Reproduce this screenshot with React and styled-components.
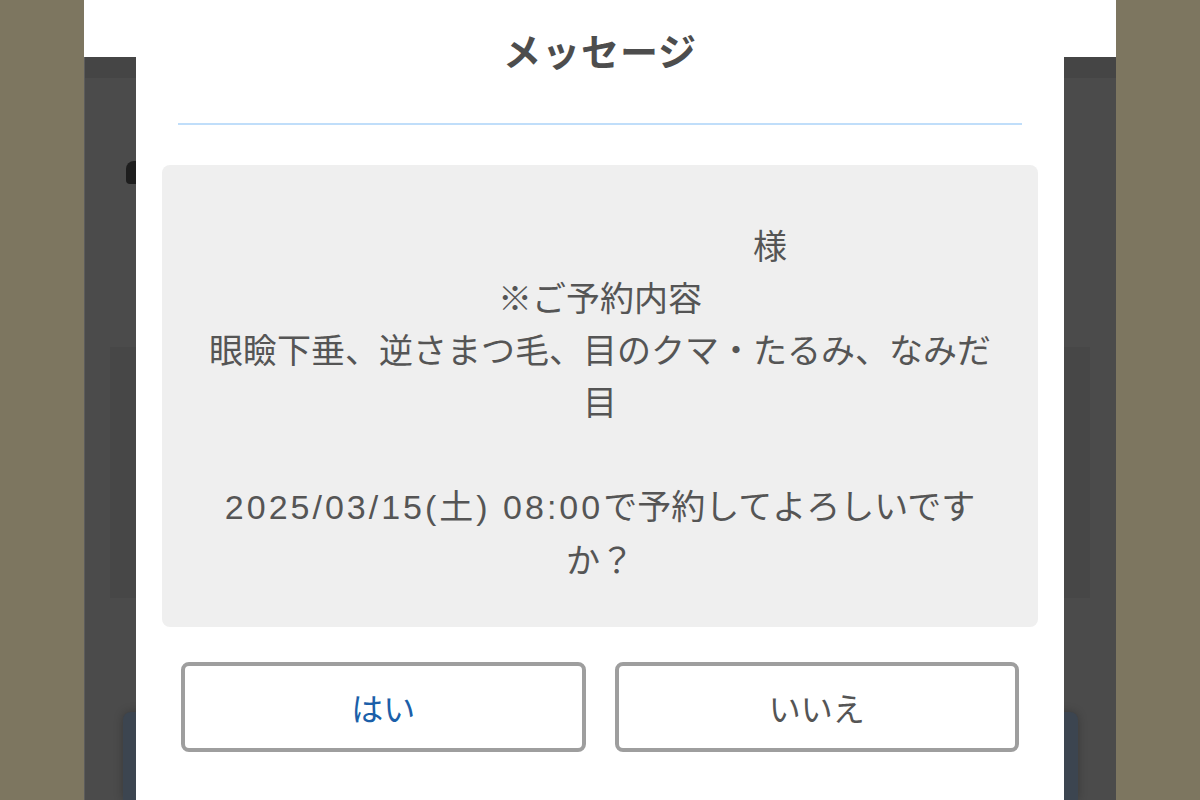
import React from "react";
import styled, { createGlobalStyle } from "styled-components";

const Global = createGlobalStyle`
  html, body { margin: 0; padding: 0; }
  body {
    font-family: "Noto Sans CJK JP", "Noto Sans", sans-serif;
    background: #7d7660;
  }
`;

const Page = styled.div`
  width: 1200px;
  height: 800px;
  overflow: hidden;
  display: flex;
  justify-content: center;
  background: #7d7660;
`;

const Column = styled.div`
  position: relative;
  width: 1032px;
  height: 800px;
  display: flex;
  flex-direction: column;
`;

const Header = styled.div`
  height: 57px;
  background: #ffffff;
  flex-shrink: 0;
`;

const Backdrop = styled.div`
  flex: 1;
  background: #4b4b4b;
  border-left: 1px solid #5c5c5c;
  display: flex;
  flex-direction: column;
`;

const TopBar = styled.div`
  height: 21px;
  background: #454545;
`;

const Tab = styled.div`
  margin: 83px 0 0 41px;
  width: 60px;
  height: 23px;
  background: #1e1e1e;
  border-radius: 8px 0 0 4px;
`;

const Panel = styled.div`
  margin: 163px 26px 0 25px;
  height: 251px;
  background: #474747;
`;

const Card = styled.div`
  margin: 114px 38px 0 38px;
  flex: 1;
  background: #3c4550;
  border-radius: 8px 8px 0 0;
  box-shadow: 0 0 10px rgba(0, 0, 0, 0.25);
`;

const Modal = styled.div`
  position: absolute;
  top: 0;
  left: 52px;
  width: 928px;
  bottom: 0;
  background: #ffffff;
  display: flex;
  flex-direction: column;
`;

const Title = styled.h2`
  margin: 27px 0 0;
  height: 46px;
  line-height: 46px;
  font-size: 38px;
  font-weight: 700;
  color: #4d4d4d;
  text-align: center;
  letter-spacing: 1px;
`;

const Divider = styled.hr`
  margin: 50px 42px 0;
  border: none;
  height: 2px;
  background: #c0defa;
`;

const MessageBox = styled.div`
  margin: 40px 26px 0;
  padding: 54px 40px 42px;
  background: #efefef;
  border-radius: 8px;
  color: #555555;
  font-size: 34px;
  line-height: 52px;
  text-align: center;
  line-break: strict;
`;

const Line = styled.div`
  min-height: 52px;
`;

const DateTime = styled.span`
  font-family: "Liberation Sans", "Noto Sans CJK JP", sans-serif;
  letter-spacing: 3px;
`;

const Actions = styled.div`
  margin: 35px 45px 0;
  display: grid;
  grid-template-columns: 1fr 1fr;
  gap: 29px;
`;

const Button = styled.button`
  box-sizing: border-box;
  height: 90px;
  border: 4px solid #9e9e9e;
  border-radius: 8px;
  background: #ffffff;
  font-family: "Noto Sans CJK JP", "Noto Sans", sans-serif;
  font-size: 32px;
  color: ${(p) => (p.$primary ? "#1b5fa9" : "#555555")};
  cursor: pointer;
`;

export default function App() {
  return (
    <Page>
      <Global />
      <Column>
        <Header />
        <Backdrop>
          <TopBar />
          <Tab />
          <Panel />
          <Card />
        </Backdrop>
        <Modal>
          <Title>メッセージ</Title>
          <Divider />
          <MessageBox>
            <Line>{"\u3000\u3000\u3000\u3000\u3000\u3000\u3000\u3000\u3000\u3000様"}</Line>
            <Line>※ご予約内容</Line>
            <Line>眼瞼下垂、逆さまつ毛、目のクマ・たるみ、なみだ目</Line>
            <Line />
            <Line>
              <DateTime>2025/03/15(土) 08:00</DateTime>で予約してよろしいですか？
            </Line>
          </MessageBox>
          <Actions>
            <Button $primary>はい</Button>
            <Button>いいえ</Button>
          </Actions>
        </Modal>
      </Column>
    </Page>
  );
}
